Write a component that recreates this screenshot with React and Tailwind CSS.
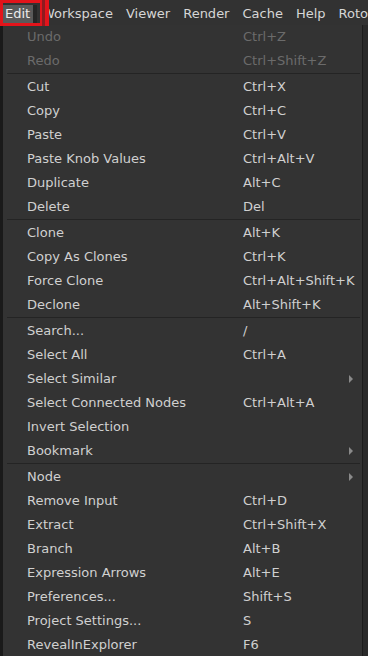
const barItems = ['Workspace', 'Viewer', 'Render', 'Cache', 'Help', 'Roto'];

const groups = [
  [
    { label: 'Undo', keys: 'Ctrl+Z', disabled: true },
    { label: 'Redo', keys: 'Ctrl+Shift+Z', disabled: true },
  ],
  [
    { label: 'Cut', keys: 'Ctrl+X' },
    { label: 'Copy', keys: 'Ctrl+C' },
    { label: 'Paste', keys: 'Ctrl+V' },
    { label: 'Paste Knob Values', keys: 'Ctrl+Alt+V' },
    { label: 'Duplicate', keys: 'Alt+C' },
    { label: 'Delete', keys: 'Del' },
  ],
  [
    { label: 'Clone', keys: 'Alt+K' },
    { label: 'Copy As Clones', keys: 'Ctrl+K' },
    { label: 'Force Clone', keys: 'Ctrl+Alt+Shift+K' },
    { label: 'Declone', keys: 'Alt+Shift+K' },
  ],
  [
    { label: 'Search...', keys: '/' },
    { label: 'Select All', keys: 'Ctrl+A' },
    { label: 'Select Similar', submenu: true },
    { label: 'Select Connected Nodes', keys: 'Ctrl+Alt+A' },
    { label: 'Invert Selection' },
    { label: 'Bookmark', submenu: true },
  ],
  [
    { label: 'Node', submenu: true },
    { label: 'Remove Input', keys: 'Ctrl+D' },
    { label: 'Extract', keys: 'Ctrl+Shift+X' },
    { label: 'Branch', keys: 'Alt+B' },
    { label: 'Expression Arrows', keys: 'Alt+E' },
    { label: 'Preferences...', keys: 'Shift+S' },
    { label: 'Project Settings...', keys: 'S' },
    { label: 'RevealInExplorer', keys: 'F6' },
  ],
];

const MenuRow = ({ item }) => (
  <div
    className={`flex h-[24px] items-center whitespace-nowrap ${
      item.disabled ? 'text-[#6b6b6b]' : 'text-[#d0d0d0]'
    }`}
  >
    <span className="w-[240px] shrink-0 pl-[24px]">{item.label}</span>
    <span className="flex-1">{item.keys}</span>
    {item.submenu && (
      <span className="mr-[9px] h-0 w-0 border-y-[4px] border-l-[4px] border-y-transparent border-l-[#8a8a8a]" />
    )}
  </div>
);

export default function App() {
  return (
    <div className="h-[656px] w-[368px] overflow-hidden bg-[#2a2a2a] font-['DejaVu_Sans',sans-serif] text-[13px]">
      {/* menu bar */}
      <div className="relative flex h-[25px] items-center bg-[#323232] pt-[2px] text-[#d6d6d6]">
        <div className="ml-[3px] flex h-[18px] items-center bg-[#5a5a5a] pl-[2px] pr-[3px] text-[#ececec]">
          Edit
        </div>
        <div className="h-[18px] w-[7px] bg-[#262626]" />
        <div className="ml-[5px] flex gap-[13px] whitespace-nowrap">
          {barItems.map((name) => (
            <span key={name}>{name}</span>
          ))}
        </div>
        {/* red highlight annotation */}
        <div className="absolute left-0 top-0 h-[26px] w-[49px] border-[3px] border-r-0 border-[#e3141b]" />
        <div className="absolute left-[40px] top-0 flex h-[26px] w-[9px]">
          <div className="w-[2px] bg-[#e3141b]" />
          <div className="w-[3px] bg-[#8e1b20]" />
          <div className="w-[4px] bg-[#e3141b]" />
        </div>
      </div>

      {/* dropdown */}
      <div className="flex">
        <div className="w-[3px] shrink-0 bg-[#1a1a1a]" />
        <div className="w-[360px] shrink-0 border-r border-[#1c1c1c] bg-[#333333]">
          {groups.map((group, gi) => (
            <div key={gi}>
              {gi > 0 && <div className="ml-[4px] mr-[2px] h-[2px] border-t border-[#242424]" />}
              {group.map((item) => (
                <MenuRow key={item.label} item={item} />
              ))}
            </div>
          ))}
        </div>
      </div>
    </div>
  );
}
